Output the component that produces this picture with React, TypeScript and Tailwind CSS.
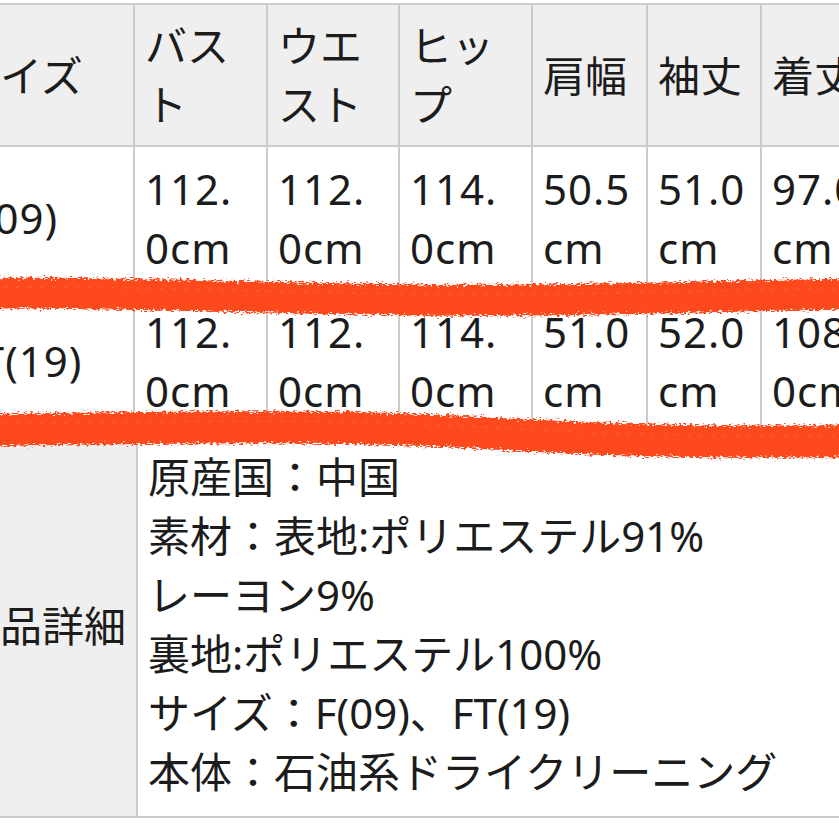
const cols = [187, 133, 132, 133, 115, 114, 115];

const header = [
  ["サイズ"],
  ["バス", "ト"],
  ["ウエ", "スト"],
  ["ヒッ", "プ"],
  ["肩幅"],
  ["袖丈"],
  ["着丈"],
];

const rows = [
  [["F(09)"], ["112.", "0cm"], ["112.", "0cm"], ["114.", "0cm"], ["50.5", "cm"], ["51.0", "cm"], ["97.0", "cm"]],
  [["FT(19)"], ["112.", "0cm"], ["112.", "0cm"], ["114.", "0cm"], ["51.0", "cm"], ["52.0", "cm"], ["108.", "0cm"]],
];

const details = [
  "原産国：中国",
  "素材：表地:ポリエステル91%",
  "レーヨン9%",
  "裏地:ポリエステル100%",
  "サイズ：F(09)、FT(19)",
  "本体：石油系ドライクリーニング",
];

function Cell({ lines, width, head }: { lines: string[]; width: number; head?: boolean }) {
  return (
    <div
      className={`flex shrink-0 items-center border-r-2 border-b-2 border-[#cbcbcb] px-[10px] py-[12px] ${head ? "bg-[#efefef]" : "bg-white tracking-[1px]"}`}
      style={{ width }}
    >
      <div className="whitespace-nowrap">
        {lines.map((l, i) => (
          <div key={i}>{l}</div>
        ))}
      </div>
    </div>
  );
}

// crayon marks drawn over the screenshot
function Strokes() {
  return (
    <svg className="pointer-events-none absolute inset-0" width="839" height="839" viewBox="0 0 839 839">
      <defs>
        <filter id="crayon" x="-5%" y="-50%" width="110%" height="200%">
          <feTurbulence type="fractalNoise" baseFrequency="0.3 0.7" numOctaves="2" seed="4" result="n" />
          <feDisplacementMap in="SourceGraphic" in2="n" scale="10" xChannelSelector="R" yChannelSelector="G" />
        </filter>
      </defs>
      <g filter="url(#crayon)" fill="none" stroke="#fd4a1e" strokeLinecap="round">
        <path d="M -20 293 C 120 292, 260 298, 420 300 S 700 296, 860 294" strokeWidth="31" />
        <path d="M -20 430 C 140 428, 300 425, 420 430 S 620 444, 860 441" strokeWidth="32" />
      </g>
      <g fill="none" stroke="#ff7a55" strokeOpacity="0.35" strokeWidth="2" strokeDasharray="3 9">
        <path d="M -20 287 C 120 286, 260 292, 420 294 S 700 290, 860 288" />
        <path d="M -20 424 C 140 422, 300 419, 420 424 S 620 438, 860 435" />
      </g>
    </svg>
  );
}

export default function App() {
  return (
    <div
      className="relative h-[839px] w-[839px] overflow-hidden bg-white pt-[3px] text-[42px] leading-[59px] text-[#1c1c1c]"
      style={{ fontFamily: '"Noto Sans", "Noto Sans CJK JP", sans-serif' }}
    >
      <div className="ml-[-52px] w-[930px]">
        <div className="border-t-2 border-[#cbcbcb]">
          <div className="flex h-[142px]">
            {header.map((h, i) => (
              <Cell key={i} lines={h} width={cols[i]} head />
            ))}
          </div>
          {rows.map((r, ri) => (
            <div key={ri} className="flex h-[143px]">
              {r.map((c, i) => (
                <Cell key={i} lines={c} width={cols[i]} />
              ))}
            </div>
          ))}
        </div>
        <div className="flex border-t-2 border-[#cbcbcb]">
          <div className="flex w-[190px] shrink-0 items-center border-r-2 border-b-2 border-[#cbcbcb] bg-[#efefef] px-[10px]">
            商品詳細
          </div>
          <div className="flex-1 border-b-2 border-[#cbcbcb] px-[10px] pt-[12px] pb-[15px]">
            {details.map((d) => (
              <div key={d} className="whitespace-nowrap">
                {d}
              </div>
            ))}
          </div>
        </div>
      </div>
      <Strokes />
    </div>
  );
}
